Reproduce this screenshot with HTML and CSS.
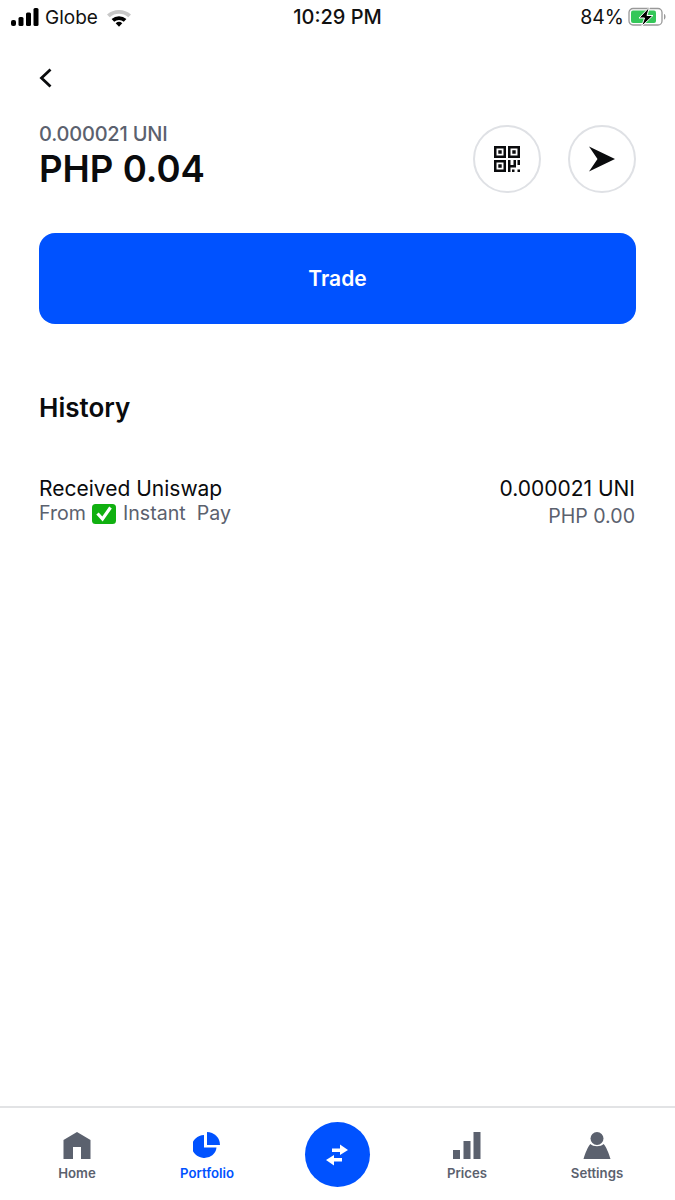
FILE: index.html
```html
<!DOCTYPE html>
<html lang="en">
<head>
    <meta charset="UTF-8">
    <meta name="viewport" content="width=device-width, initial-scale=1.0">
    <title>UNI</title>
    <link rel="stylesheet" href="styles.css">
</head>
<body>
    <div class="status-bar">
        <div class="status-left">
            <svg class="signal" width="28" height="18" viewBox="0 0 28 18">
                <rect x="0" y="12" width="5" height="6" rx="2" fill="#000"/>
                <rect x="7.500" y="9" width="5" height="9" rx="1.500" fill="#000"/>
                <rect x="15" y="4.500" width="5" height="13.500" rx="1.500" fill="#000"/>
                <rect x="22.500" y="0" width="5" height="18" rx="1.500" fill="#000"/>
            </svg>
            <span>Globe</span>
            <svg class="wifi" width="26" height="19" viewBox="0 0 26 19">
                <path d="M1 6.500 A18 18 0 0 1 25 6.500 L22.300 9.300 A14.200 14.200 0 0 0 3.700 9.300 Z" fill="#c8c8c8"/>
                <path d="M5.600 11 A11 11 0 0 1 20.400 11 L17.800 13.700 A7.400 7.400 0 0 0 8.200 13.700 Z" fill="#000"/>
                <path d="M9.700 15.300 A5 5 0 0 1 16.300 15.300 L13 18.700 Z" fill="#000"/>
            </svg>
        </div>
        <div class="status-time">10:29 PM</div>
        <div class="status-right">
            <span>84%</span>
            <svg width="40" height="20" viewBox="0 0 40 20">
                <rect x="1" y="1.500" width="33" height="16.500" rx="4" fill="#fff" stroke="#999" stroke-width="1.300"/>
                <rect x="3" y="3.500" width="25" height="12.500" rx="2" fill="#34c759"/>
                <path d="M36 7 C38 7.500 38 12 36 12.500 Z" fill="#999"/>
                <path d="M21.500 0 L11 11 H16.500 L13.500 19.500 L25 8.500 H19 Z" fill="#000" stroke="#fff" stroke-width="1"/>
            </svg>
        </div>
    </div>

    <main class="content">
        <svg class="back" width="14" height="20" viewBox="0 0 14 20">
            <path d="M11.500 1.500 L2.500 10 L11.500 18.500" fill="none" stroke="#0a0b0d" stroke-width="2.800"/>
        </svg>

        <div class="asset-head">
            <div>
                <div class="asset-amount">0.000021 UNI</div>
                <div class="asset-value">PHP 0.04</div>
            </div>
            <div class="asset-actions">
                <div class="round-btn">
                    <svg width="26" height="26" viewBox="0 0 26 26">
                        <path fill="#0a0b0d" fill-rule="evenodd" d="M0 0h12v12H0z M2.500 2.500v7h7v-7z M14 0h12v12H14z M16.500 2.500v7h7v-7z M0 14h12v12H0z M2.500 16.500v7h7v-7z"/>
                        <path fill="#0a0b0d" d="M4.300 4.300h3.400v3.400H4.300z M18.300 4.300h3.400v3.400h-3.400z M4.300 18.300h3.400v3.400H4.300z"/>
                        <path fill="#0a0b0d" d="M14 14h2.500v12H14z M16.500 19h3v2.500h-3z M19.500 14h2.500v7.500h-2.500z M23.500 14H26v5h-2.500z M18 23.500h2.500V26H18z M23.500 23.500H26V26h-2.500z"/>
                    </svg>
                </div>
                <div class="round-btn">
                    <svg width="28" height="26" viewBox="0 0 28 26">
                        <path d="M1 0.500 L27 13 L1 25.500 L9.500 13 Z" fill="#0a0b0d"/>
                    </svg>
                </div>
            </div>
        </div>

        <button class="trade-btn">Trade</button>

        <h2 class="section-title">History</h2>

        <div class="history-row">
            <div>
                <div class="row-title">Received Uniswap</div>
                <div class="row-sub">From <span class="check-emoji"><svg width="24" height="20" viewBox="0 0 24 20"><rect width="24" height="20" rx="3.500" fill="#10b010"/><path d="M5.500 9.500 L10.500 15 L18.500 3.500" fill="none" stroke="#fff" stroke-width="3.200"/></svg></span> Instant&nbsp; Pay</div>
            </div>
            <div class="row-right">
                <div class="row-title">0.000021 UNI</div>
                <div class="row-sub">PHP 0.00</div>
            </div>
        </div>
    </main>

    <nav class="tab-bar">
        <div class="tab">
            <svg width="28" height="27" viewBox="0 0 28 27">
                <path fill="#5b616e" fill-rule="evenodd" d="M14 0 L27.500 8 V27 H18 V15 H10 V27 H.500 V8 Z"/>
            </svg>
            <span>Home</span>
        </div>
        <div class="tab tab-active">
            <svg width="28" height="27" viewBox="0 0 28 27">
                <path fill="#0052ff" d="M11 3 V15.500 H23.500 A12.300 11.500 0 1 1 11 3 Z"/>
                <path fill="#0052ff" d="M14 0 A13 13 0 0 1 27 13 H14 Z"/>
            </svg>
            <span>Portfolio</span>
        </div>
        <div class="tab">
            <div class="swap-btn">
                <svg width="24" height="22" viewBox="0 0 24 22">
                    <path fill="#fff" d="M7 4.500 H15 V0.500 L23 6 L15 11 V8 H7 Z"/>
                    <path fill="#fff" d="M17 14 H9 V11 L1 16 L9 21.500 V17.500 H17 Z"/>
                </svg>
            </div>
        </div>
        <div class="tab">
            <svg width="28" height="27" viewBox="0 0 28 27">
                <path fill="#5b616e" d="M0 18h7v9H0z M10.500 9h7v18h-7z M20.500 0h7v27h-7z"/>
            </svg>
            <span>Prices</span>
        </div>
        <div class="tab">
            <svg width="28" height="27" viewBox="0 0 28 27">
                <circle cx="14" cy="6.500" r="6.500" fill="#5b616e"/>
                <path fill="#5b616e" d="M7.500 12 C10 15 18 15 20.500 12 C23 14 26 22 27.500 27 H.500 C2 22 5 14 7.500 12 Z"/>
            </svg>
            <span>Settings</span>
        </div>
    </nav>
</body>
</html>
```

FILE: styles.css
```css
html, body {
    margin: 0;
    padding: 0;
}
body {
    height: 1200px;
    display: flex;
    flex-direction: column;
    overflow: hidden;
    font-family: Inter, "Liberation Sans", sans-serif;
    background-color: #fff;
    color: #0a0b0d;
}
.status-bar {
    height: 34px;
    padding: 0 9px;
    display: grid;
    grid-template-columns: 1fr auto 1fr;
    align-items: center;
    font-size: 19px;
    color: #111;
}
.status-left {
    display: flex;
    align-items: center;
    gap: 6px;
    margin-left: 2px;
}
.wifi {
    margin-left: 2px;
}
.status-time {
    font-size: 20px;
    font-weight: 500;
}
.status-right {
    display: flex;
    align-items: center;
    justify-content: flex-end;
    gap: 4px;
    margin-right: -2px;
    font-size: 19.500px;
}
.content {
    flex: 1;
    padding: 34px 39px 0 39px;
}
.back {
    display: block;
}
.asset-head {
    margin-top: 37px;
    display: flex;
    justify-content: space-between;
    align-items: flex-start;
}
.asset-amount {
    font-size: 20px;
    line-height: 18px;
    letter-spacing: -0.2px;
    font-weight: 500;
    color: #5b616e;
}
.asset-value {
    margin-top: 4px;
    font-size: 36.600px;
    line-height: 44px;
    font-weight: 600;
}
.asset-actions {
    display: flex;
    gap: 27px;
}
.round-btn {
    width: 68px;
    height: 68px;
    box-sizing: border-box;
    border: 2px solid #dfe1e5;
    border-radius: 50%;
    display: flex;
    align-items: center;
    justify-content: center;
}
.trade-btn {
    display: block;
    width: 100%;
    height: 91px;
    margin-top: 40px;
    border: none;
    border-radius: 16px;
    background-color: #0052ff;
    color: #fff;
    font-family: inherit;
    font-size: 21px;
    font-weight: 600;
}
.section-title {
    margin: 68px 0 0 0;
    font-size: 26px;
    line-height: 32px;
    font-weight: 600;
}
.history-row {
    margin-top: 53px;
    display: flex;
    justify-content: space-between;
    padding-right: 1px;
}
.row-title {
    font-size: 21px;
    line-height: 24px;
}
.row-sub {
    font-size: 19.600px;
    line-height: 24px;
    color: #5b616e;
}
.row-right .row-sub {
    margin-top: 3px;
}
.row-right {
    text-align: right;
}
.check-emoji {
    margin: 0 1px;
}
.check-emoji svg {
    vertical-align: -4px;
}
.tab-bar {
    height: 92px;
    border-top: 2px solid #e2e3e5;
    padding: 0 13px 0 12px;
    display: grid;
    grid-template-columns: repeat(5, 1fr);
}
.tab {
    display: flex;
    flex-direction: column;
    align-items: center;
    padding-top: 24px;
    font-size: 13.200px;
    line-height: 18px;
    font-weight: 600;
    color: #5b616e;
}
.tab span {
    margin-top: 5px;
}
.tab-active {
    color: #0052ff;
}
.swap-btn {
    width: 65px;
    height: 65px;
    margin-top: -10px;
    border-radius: 50%;
    background-color: #0052ff;
    display: flex;
    align-items: center;
    justify-content: center;
}
```
